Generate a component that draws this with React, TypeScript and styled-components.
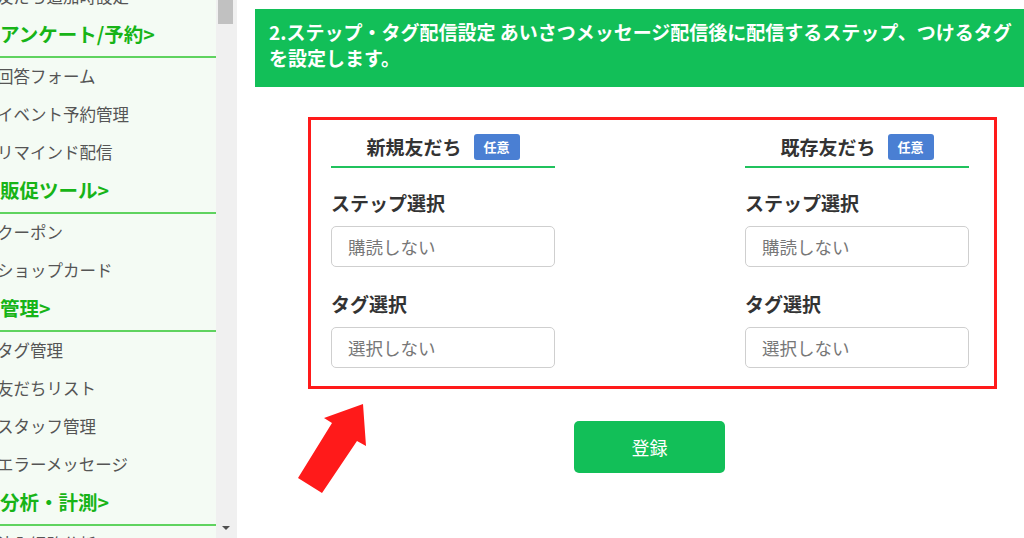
import styled, { createGlobalStyle } from "styled-components";

const GlobalStyle = createGlobalStyle`
  html, body {
    margin: 0;
    padding: 0;
    background: #ffffff;
  }
  body {
    font-family: "Noto Sans CJK JP", "Noto Sans", sans-serif;
  }
  * {
    box-sizing: border-box;
  }
`;

const UiPage = styled.div`
  position: relative;
  display: flex;
  width: 1024px;
  height: 538px;
  overflow: hidden;
`;

const UiSidebar = styled.aside`
  width: 216px;
  flex-shrink: 0;
  height: 100%;
  background-color: #f4fbf4;
  overflow: hidden;
`;

const UiSideList = styled.div`
  margin-top: -22px;
`;

const UiSideHeading = styled.div`
  height: 42px;
  display: flex;
  align-items: center;
  padding: 0 0 5px 0;
  border-bottom: 2px solid #5fd35f;
  font-weight: 700;
  font-size: 19.5px;
  color: #17b417;
  white-space: nowrap;
`;

const UiSideItem = styled.div`
  height: 38px;
  display: flex;
  align-items: center;
  padding-bottom: 3px;
  margin-left: -3px;
  font-size: 16.5px;
  color: #555555;
  white-space: nowrap;
`;

const UiScrollbar = styled.div`
  width: 21px;
  flex-shrink: 0;
  height: 100%;
  background-color: #f0f0f0;
  display: flex;
  flex-direction: column;
  align-items: flex-start;
  padding-left: 2px;
`;

const UiScrollThumb = styled.div`
  width: 15px;
  height: 24px;
  background-color: #c1c1c1;
`;

const UiScrollArrow = styled.div`
  margin-top: auto;
  margin-bottom: 8px;
  margin-left: 4px;
  width: 0;
  height: 0;
  border-left: 4px solid transparent;
  border-right: 4px solid transparent;
  border-top: 4px solid #505050;
`;

const UiMain = styled.main`
  flex: 1;
  padding: 9px 0 0 18px;
  overflow: hidden;
`;

const UiBanner = styled.div`
  width: 790px;
  height: 78px;
  padding: 10px 14px;
  background-color: #12bf58;
  color: #ffffff;
  font-weight: 700;
  font-size: 19px;
  line-height: 26px;
  white-space: nowrap;
`;

const UiFrame = styled.div`
  width: 689px;
  margin: 30px 0 0 53px;
  padding: 0 25px 18px 20px;
  border: 3px solid #ff1a1a;
  display: flex;
  justify-content: space-between;
`;

const UiColumn = styled.div`
  width: 224px;
`;

const UiColumnHead = styled.div`
  display: flex;
  justify-content: center;
  align-items: center;
  gap: 12px;
  padding: 13px 0 6px;
  border-bottom: 2px solid #20c25d;
  font-weight: 700;
  font-size: 19px;
  color: #333333;
`;

const UiBadge = styled.span`
  display: inline-flex;
  align-items: center;
  justify-content: center;
  width: 46px;
  height: 26px;
  border-radius: 3px;
  background-color: #4a7fd3;
  color: #ffffff;
  font-size: 13px;
  font-weight: 700;
`;

const UiLabel = styled.div<{ $gap: number }>`
  margin-top: ${(p) => p.$gap}px;
  font-weight: 700;
  font-size: 19px;
  line-height: 24px;
  color: #333333;
`;

const UiSelect = styled.div`
  margin-top: 11px;
  height: 41px;
  display: flex;
  align-items: center;
  padding-left: 16px;
  border: 1px solid #cfcfcf;
  border-radius: 5px;
  background-color: #ffffff;
  font-size: 17.5px;
  color: #777777;
`;

const UiActions = styled.div`
  width: 689px;
  margin: 32px 0 0 53px;
  display: flex;
  justify-content: center;
`;

const UiSubmit = styled.button`
  width: 151px;
  height: 52px;
  margin-right: 6px;
  border: none;
  border-radius: 5px;
  background-color: #12bf58;
  color: #ffffff;
  font-family: inherit;
  font-size: 18px;
  cursor: pointer;
`;

const UiArrow = styled.svg`
  position: absolute;
  left: 0;
  top: 0;
  pointer-events: none;
`;

const menu: { heading?: string; items: string[] }[] = [
  { items: ["友だち追加時設定"] },
  { heading: "アンケート/予約>", items: ["回答フォーム", "イベント予約管理", "リマインド配信"] },
  { heading: "販促ツール>", items: ["クーポン", "ショップカード"] },
  { heading: "管理>", items: ["タグ管理", "友だちリスト", "スタッフ管理", "エラーメッセージ"] },
  { heading: "分析・計測>", items: ["流入経路分析"] },
];

const columns = ["新規友だち", "既存友だち"];

export default function App() {
  return (
    <>
      <GlobalStyle />
      <UiPage>
        <UiSidebar>
          <UiSideList>
            {menu.map((group, i) => (
              <div key={i}>
                {group.heading && <UiSideHeading>{group.heading}</UiSideHeading>}
                {group.items.map((item) => (
                  <UiSideItem key={item}>{item}</UiSideItem>
                ))}
              </div>
            ))}
          </UiSideList>
        </UiSidebar>
        <UiScrollbar>
          <UiScrollThumb />
          <UiScrollArrow />
        </UiScrollbar>
        <UiMain>
          <UiBanner>
            2.ステップ・タグ配信設定 あいさつメッセージ配信後に配信するステップ、つけるタグ
            <br />
            を設定します。
          </UiBanner>
          <UiFrame>
            {columns.map((title) => (
              <UiColumn key={title}>
                <UiColumnHead>
                  {title}
                  <UiBadge>任意</UiBadge>
                </UiColumnHead>
                <UiLabel $gap={23}>ステップ選択</UiLabel>
                <UiSelect>購読しない</UiSelect>
                <UiLabel $gap={25}>タグ選択</UiLabel>
                <UiSelect>選択しない</UiSelect>
              </UiColumn>
            ))}
          </UiFrame>
          <UiActions>
            <UiSubmit>登録</UiSubmit>
          </UiActions>
        </UiMain>
        <UiArrow width="1024" height="538" viewBox="0 0 1024 538">
          <polygon
            points="363,404 324,418 332,423 298,478 322,493 357,441 366,446"
            fill="#ff1a1a"
          />
        </UiArrow>
      </UiPage>
    </>
  );
}
